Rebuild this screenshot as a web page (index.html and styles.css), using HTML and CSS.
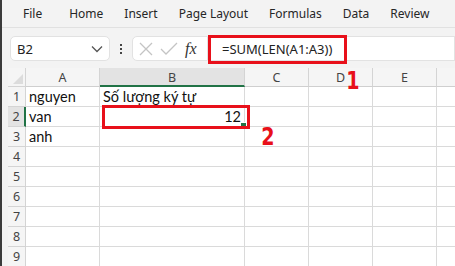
FILE: index.html
```html
<!DOCTYPE html>
<html lang="vi">
<head>
    <meta charset="UTF-8">
    <title>Excel - SUM LEN</title>
    <link rel="stylesheet" href="styles.css">
</head>
<body>
<div class="app">
    <nav class="menu">
        <span class="file">File</span>
        <span>Home</span>
        <span>Insert</span>
        <span>Page Layout</span>
        <span>Formulas</span>
        <span>Data</span>
        <span>Review</span>
    </nav>

    <div class="fbar">
        <div class="namebox">
            <span>B2</span>
            <svg width="12" height="8" viewBox="0 0 12 8"><path d="M1 1.5 L6 6.5 L11 1.5" fill="none" stroke="#555" stroke-width="1.3"/></svg>
        </div>
        <div class="dots"><i></i><i></i><i></i></div>
        <div class="fbtns">
            <svg width="16" height="16" viewBox="0 0 16 16"><path d="M2 2 L14 14 M14 2 L2 14" stroke="#c4c4c4" stroke-width="1.3"/></svg>
            <svg width="18" height="16" viewBox="0 0 18 16"><path d="M1 8 L6 13 L17 2" fill="none" stroke="#c4c4c4" stroke-width="1.3"/></svg>
            <span class="fx">fx</span>
        </div>
        <div class="finput">
            <span class="ftext">=SUM(LEN(A1:A3))</span>
            <div class="mark mark-formula"></div>
        </div>
    </div>

    <div class="sheet">
        <div class="grid">
            <div class="corner"><svg width="10" height="10" viewBox="0 0 10 10"><path d="M10 0 L10 10 L0 10 Z" fill="#dcdcdc"/></svg></div>
            <div class="ch">A</div>
            <div class="ch sel">B</div>
            <div class="ch">C</div>
            <div class="ch">D</div>
            <div class="ch">E</div>
            <div class="ch"></div>

            <div class="rh">1</div>
            <div class="c">nguyen</div>
            <div class="c">Số lượng ký tự</div>
            <div class="c"></div><div class="c"></div><div class="c"></div><div class="c"></div>

            <div class="rh sel">2</div>
            <div class="c">van</div>
            <div class="c num active">12<b class="handle"></b></div>
            <div class="c"></div><div class="c"></div><div class="c"></div><div class="c"></div>

            <div class="rh">3</div>
            <div class="c">anh</div>
            <div class="c"></div><div class="c"></div><div class="c"></div><div class="c"></div><div class="c"></div>

            <div class="rh">4</div>
            <div class="c"></div><div class="c"></div><div class="c"></div><div class="c"></div><div class="c"></div><div class="c"></div>
            <div class="rh">5</div>
            <div class="c"></div><div class="c"></div><div class="c"></div><div class="c"></div><div class="c"></div><div class="c"></div>
            <div class="rh">6</div>
            <div class="c"></div><div class="c"></div><div class="c"></div><div class="c"></div><div class="c"></div><div class="c"></div>
            <div class="rh">7</div>
            <div class="c"></div><div class="c"></div><div class="c"></div><div class="c"></div><div class="c"></div><div class="c"></div>
            <div class="rh">8</div>
            <div class="c"></div><div class="c"></div><div class="c"></div><div class="c"></div><div class="c"></div><div class="c"></div>
            <div class="rh">9</div>
            <div class="c"></div><div class="c"></div><div class="c"></div><div class="c"></div><div class="c"></div><div class="c"></div>
        </div>
        <div class="mark mark-cell"></div>
        <span class="tag tag-1">1</span>
        <span class="tag tag-2">2</span>
    </div>
</div>
</body>
</html>
```

FILE: styles.css
```css
body {
    margin: 0;
    font-family: 'Noto Sans', sans-serif;
    color: #222;
    background: #f3f3f3;
}
.app {
    position: relative;
    width: 455px;
    height: 266px;
    overflow: hidden;
    border-left: 2px solid #3b3b3b;
    box-sizing: border-box;
    background: #f3f3f3;
}
.menu {
    height: 27px;
    display: flex;
    align-items: center;
    gap: 21px;
    padding-left: 21px;
    font-size: 12px;
    color: #262626;
    border-bottom: 1px solid #e1e1e1;
    background: #f3f3f3;
}
.menu .file {
    margin-right: 6px;
}
.fbar {
    height: 40px;
    display: flex;
    align-items: center;
    padding-left: 8px;
    padding-top: 1px;
    box-sizing: border-box;
}
.namebox {
    width: 100px;
    height: 25px;
    box-sizing: border-box;
    background: #fff;
    border: 1px solid #e2e2e2;
    border-radius: 5px;
    display: flex;
    align-items: center;
    justify-content: space-between;
    padding: 0 6px 0 6px;
    font-size: 13px;
}
.dots {
    width: 22px;
    display: flex;
    flex-direction: column;
    align-items: center;
    gap: 2px;
}
.dots i {
    width: 2px;
    height: 2px;
    background: #444;
}
.fbtns {
    width: 76px;
    height: 25px;
    box-sizing: border-box;
    background: #fff;
    border: 1px solid #e2e2e2;
    border-radius: 5px 0 0 5px;
    display: flex;
    align-items: center;
    gap: 6px;
    padding-left: 5px;
}
.fx {
    font-family: 'Liberation Serif', serif;
    font-style: italic;
    font-size: 16px;
    color: #333;
    margin-left: 1px;
}
.finput {
    position: relative;
    flex: 1;
    height: 25px;
    box-sizing: border-box;
    background: #fff;
    border: 1px solid #e2e2e2;
    border-left: none;
    display: flex;
    align-items: center;
    padding-left: 14px;
    font-size: 13px;
}
.mark {
    position: absolute;
    border: 3px solid #e8101a;
    box-sizing: border-box;
}
.mark-formula {
    left: 0;
    top: -2px;
    width: 139px;
    height: 29px;
}
.sheet {
    position: relative;
    padding-left: 6px;
}
.grid {
    display: grid;
    grid-template-columns: 18px 74px 145px 64px 64px 64px 30px;
    grid-template-rows: 19px repeat(9, 20px);
    background: #fff;
    font-family: 'Lato', sans-serif;
    font-size: 14.5px;
}
.corner {
    background: #f5f5f5;
    border-right: 1px solid #d4d4d4;
    border-bottom: 1px solid #d4d4d4;
    display: flex;
    align-items: flex-end;
    justify-content: flex-end;
    padding: 0 2px 2px 0;
}
.ch {
    background: #f5f5f5;
    border-right: 1px solid #d4d4d4;
    border-bottom: 1px solid #cfcfcf;
    text-align: center;
    font-family: 'Noto Sans', sans-serif;
    font-size: 12.5px;
    color: #444;
    line-height: 19px;
}
.ch.sel {
    background: #e3e3e3;
    border-bottom: 2px solid #217346;
}
.rh {
    background: #f5f5f5;
    border-right: 1px solid #d4d4d4;
    border-bottom: 1px solid #d4d4d4;
    text-align: center;
    font-family: 'Noto Sans', sans-serif;
    font-size: 12.5px;
    color: #444;
    line-height: 20px;
}
.rh.sel {
    background: #e3e3e3;
    border-right: 2px solid #217346;
}
.c {
    border-right: 1px solid #dadada;
    border-bottom: 1px solid #dadada;
    padding-left: 3px;
    line-height: 20px;
    white-space: nowrap;
    color: #111;
}
.c.num {
    text-align: right;
    padding-right: 3px;
    position: relative;
}
.handle {
    position: absolute;
    right: -3px;
    bottom: -3px;
    width: 5px;
    height: 5px;
    background: #217346;
    border: 1px solid #fff;
}
.mark-cell {
    left: 100px;
    top: 37px;
    width: 148px;
    height: 24px;
}
.tag {
    position: absolute;
    font-family: 'DejaVu Sans Condensed', 'DejaVu Sans', sans-serif;
    font-weight: bold;
    font-size: 25px;
    color: #e8101a;
    line-height: 1;
    transform: scaleX(0.85);
}
.tag-1 {
    left: 343px;
    top: 0px;
}
.tag-2 {
    left: 258px;
    top: 56px;
}
```
